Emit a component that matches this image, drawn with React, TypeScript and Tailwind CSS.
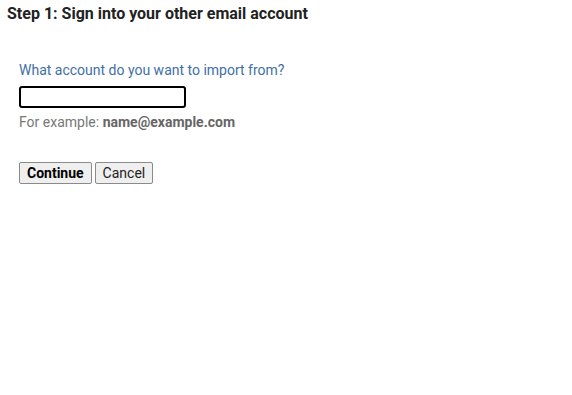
export default function App() {
  return (
    <div className="w-[572px] h-[395px] bg-white font-['Roboto',sans-serif]">
      {/* Header */}
      <h1 className="px-[7px] pt-[4px] text-[16px] leading-[20px] font-bold text-[#222]">
        Step 1: Sign into your other email account
      </h1>

      <div className="pl-[19px] pt-[38px]">
        <label className="block text-[14px] leading-[16px] text-[#3f6fa6]">
          What account do you want to import from?
        </label>
        <input
          type="text"
          className="mt-[8px] block w-[167px] h-[22px] rounded-[3px] border-2 border-black bg-white outline-none"
        />
        <p className="mt-[6px] text-[14px] leading-[16px] text-[#777]">
          For example: <span className="font-bold text-[#666]">name@example.com</span>
        </p>

        <div className="mt-[32px] flex gap-[3px]">
          <button className="h-[22px] px-[7px] rounded-[2px] border border-[#8a8a8a] bg-[#efefef] text-[14px] leading-[16px] font-bold text-black">
            Continue
          </button>
          <button className="h-[22px] px-[7px] rounded-[2px] border border-[#8a8a8a] bg-[#efefef] text-[14px] leading-[16px] text-[#222]">
            Cancel
          </button>
        </div>
      </div>
    </div>
  )
}
